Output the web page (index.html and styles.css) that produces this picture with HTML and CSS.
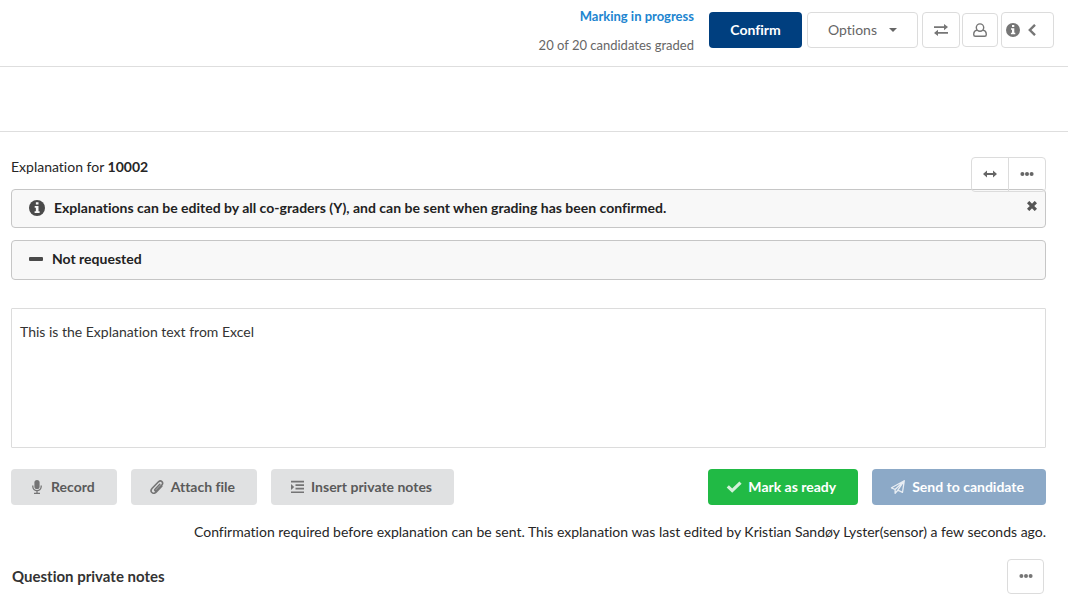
FILE: index.html
```html
<!DOCTYPE html>
<html lang="en">
<head>
<meta charset="utf-8">
<title>Explanation for 10002</title>
<link rel="stylesheet" href="styles.css">
</head>
<body>
<header class="topbar">
  <div class="status">
    <a class="status-link" href="#">Marking in progress</a>
    <span class="status-count">20 of 20 candidates graded</span>
  </div>
  <div class="actions">
    <button class="btn confirm" type="button">Confirm</button>
    <button class="btn outline options" type="button">Options
      <svg class="caret" width="8" height="4" viewBox="0 0 8 4"><path d="M0 0h8L4 4z" fill="currentColor"/></svg>
    </button>
    <button class="btn outline swap" type="button" aria-label="Swap">
      <svg width="14" height="12" viewBox="0 0 14 12" fill="currentColor"><path d="M0 2.200h10V0l4 3.100-4 3.100V4.100H0zM14 7.900H4V5.800L0 8.900 4 12V9.800h10z"/></svg>
    </button>
    <button class="btn outline user" type="button" aria-label="User">
      <svg width="14" height="14" viewBox="0 0 14 14" fill="none" stroke="currentColor" stroke-width="1.400"><circle cx="7" cy="4.600" r="3.700"/><path d="M4 7.200C1.800 7.500.7 9.400.7 11.500c0 1.100.7 1.800 1.600 1.800h9.400c.9 0 1.600-.7 1.600-1.800 0-2.100-1.100-4-3.300-4.300"/></svg>
    </button>
    <button class="btn outline info" type="button" aria-label="Show information">
      <svg width="14" height="14" viewBox="0 0 14 14"><circle cx="7" cy="7" r="7" fill="currentColor"/><path d="M6 2h2.300v2H6zM5 5.200h3.300v4.600h1V11.300H4.900V9.800h1.100V6.700H5z" fill="#fff"/></svg>
      <svg width="8" height="12" viewBox="0 0 8 12" fill="none" stroke="currentColor" stroke-width="2.400"><path d="M7 .8 1.800 6 7 11.200"/></svg>
    </button>
  </div>
</header>
<div class="subbar"></div>
<main class="content">
  <section class="explanation">
    <p class="caption">Explanation for <b>10002</b></p>
    <div class="group">
      <button class="group-btn" type="button" aria-label="Expand">
        <svg width="14" height="8" viewBox="0 0 14 8" fill="currentColor"><path d="M0 4 4 .4v2.600h6V.4L14 4l-4 3.600V5H4v2.600z"/></svg>
      </button>
      <button class="group-btn" type="button" aria-label="More">
        <svg width="14" height="4" viewBox="0 0 14 4" fill="currentColor"><circle cx="2.400" cy="2" r="2"/><circle cx="7" cy="2" r="2"/><circle cx="11.600" cy="2" r="2"/></svg>
      </button>
    </div>
    <div class="message">
      <svg class="message-icon" width="16" height="16" viewBox="0 0 14 14"><circle cx="7" cy="7" r="7" fill="currentColor"/><path d="M6 2h2.300v2H6zM5 5.200h3.300v4.600h1V11.300H4.900V9.800h1.100V6.700H5z" fill="#f8f8f8"/></svg>
      <span class="message-text">Explanations can be edited by all co-graders (Y), and can be sent when grading has been confirmed.</span>
      <button class="close" type="button" aria-label="Close">
        <svg width="10" height="10" viewBox="0 0 9 9" fill="none" stroke="currentColor" stroke-width="3"><path d="m1 1 7 7M8 1 1 8"/></svg>
      </button>
    </div>
    <div class="message request">
      <svg width="14" height="4" viewBox="0 0 14 4"><rect width="14" height="4" rx="1" fill="currentColor"/></svg>
      <span class="message-text">Not requested</span>
    </div>
    <textarea class="editor" aria-label="Explanation">This is the Explanation text from Excel</textarea>
    <div class="toolbar">
      <button class="btn grey" type="button">
        <svg class="icon" width="16" height="14" viewBox="0 0 16 14"><rect x="5.400" y="0" width="5.200" height="9" rx="2.600" fill="currentColor"/><path d="M3.800 5.400v1.200a4.200 4 0 0 0 8.400 0V5.400M8 10.500V13M5 13.300h6" fill="none" stroke="currentColor" stroke-width="1.300"/></svg>
        Record
      </button>
      <button class="btn grey" type="button">
        <svg class="icon" width="16" height="14" viewBox="0 0 16 14" fill="none" stroke="currentColor" stroke-width="1.600" stroke-linecap="round"><path d="m10.800 4.300-4.700 4.900c-1 1.100.3 2.300 1.300 1.300l5.300-5.400c2.400-2.600-.8-5.600-3.200-3.300L3.200 8.200c-3 3.300.9 6.800 3.900 3.900l5.700-5.800"/></svg>
        Attach file
      </button>
      <button class="btn grey" type="button">
        <svg class="icon" width="16" height="14" viewBox="0 0 16 14" fill="currentColor"><path d="M2 .8h13v1.600H2zM6.500 4.300H15v1.600H6.500zM6.500 7.800H15v1.600H6.500zM2 11.500h13v1.600H2zM2 3.900 5.200 6.900 2 9.900z"/></svg>
        Insert private notes
      </button>
      <button class="btn green" type="button">
        <svg class="icon" width="16" height="14" viewBox="0 0 16 14" fill="none" stroke="currentColor" stroke-width="3.200"><path d="m1.800 6.400 4.400 4.200L14.500 2.600"/></svg>
        Mark as ready
      </button>
      <button class="btn send" type="button">
        <svg class="icon" width="16" height="14" viewBox="0 0 16 14" fill="none" stroke="currentColor" stroke-width="1.300" stroke-linejoin="round"><path d="M14.300.7 1.500 7.800l3.600 1.700L14.300.7 12.500 12.300 7.800 10.200 14.300.7M5.100 9.500v3.800l2.700-3.100"/></svg>
        Send to candidate
      </button>
    </div>
    <p class="note">Confirmation required before explanation can be sent. This explanation was last edited by Kristian Sandøy Lyster(sensor) a few seconds ago.</p>
  </section>
  <section class="notes">
    <h2 class="notes-title">Question private notes</h2>
    <button class="btn outline more" type="button" aria-label="More">
      <svg width="14" height="4" viewBox="0 0 14 4" fill="currentColor"><circle cx="2.400" cy="2" r="2"/><circle cx="7" cy="2" r="2"/><circle cx="11.600" cy="2" r="2"/></svg>
    </button>
  </section>
</main>
</body>
</html>
```

FILE: styles.css
```css
* { box-sizing: border-box; }
body {
  margin: 0;
  background: #fff;
  color: #262626;
  font: 14px/20px Lato, "Liberation Sans", sans-serif;
  font-variant-ligatures: none;
}
button, textarea { font: inherit; font-variant-ligatures: none; margin: 0; }
button { cursor: pointer; }
svg { display: block; flex: none; }
p, h2 { margin: 0; }

.topbar {
  display: flex;
  justify-content: flex-end;
  gap: 15px;
  height: 67px;
  padding: 0 14px 0 0;
  border-bottom: 1px solid #dedede;
}
.status {
  display: flex;
  flex-direction: column;
  align-items: flex-end;
  gap: 9px;
  padding-top: 6px;
  font-size: 13px;
}
.status-link { color: #2185d0; font-weight: 700; text-decoration: none; }
.status-count { color: #666; }
.actions { display: flex; align-items: center; gap: 4px; height: 60px; }

.btn {
  display: flex;
  align-items: center;
  justify-content: center;
  height: 36px;
  padding: 0 22px 0 18px;
  border: 0;
  border-radius: 4px;
  font-weight: 700;
  white-space: nowrap;
}
.confirm { width: 93px; margin-right: 1px; padding: 0; background: #003f7f; color: #fff; }
.outline {
  border: 1px solid #dcdcdc;
  background: #fff;
  color: #767676;
  font-weight: 400;
}
.options { gap: 12px; width: 111px; padding: 0; color: #666; }
.swap { width: 38px; padding: 0; }
.user { width: 36px; height: 34px; margin-left: -2px; padding: 0; }
.info { gap: 8px; width: 53px; margin-left: -1px; padding: 0 13px 0 0; }

.subbar { height: 65px; border-bottom: 1px solid #dedede; }

.content { padding: 25px 22px 18px 11px; }
.explanation { position: relative; }
.caption { margin-bottom: 12px; }
.group {
  position: absolute;
  top: 0;
  right: 0;
  z-index: 1;
  display: flex;
  height: 35px;
  border: 1px solid #dcdcdc;
  border-radius: 4px;
}
.group-btn {
  display: flex;
  align-items: center;
  justify-content: center;
  width: 36px;
  padding: 0 0 1px;
  border: 0;
  background: transparent;
  color: #666;
}
.group-btn + .group-btn { width: 37px; border-left: 1px solid #dcdcdc; }

.message {
  display: flex;
  align-items: center;
  gap: 9px;
  min-height: 39px;
  margin-bottom: 12px;
  padding: 0 8px 2px 17px;
  border: 1px solid #c6c6c6;
  border-radius: 4px;
  background: #f8f8f8;
  color: #4a4a4a;
  font-weight: 700;
}
.message-text { color: #222; }
.close { margin-left: auto; padding: 0 0 3px; border: 0; background: transparent; color: #555; }
.request { min-height: 40px; margin-bottom: 28px; }

.editor {
  display: block;
  width: 100%;
  height: 140px;
  padding: 13px 8px;
  border: 1px solid #dcdcdc;
  border-radius: 1px;
  color: #333;
  resize: none;
  outline: 0;
}
.toolbar { display: flex; gap: 14px; margin: 21px 0 17px; }
.icon { margin-right: 6px; opacity: .8; }
.grey { background: #e0e1e2; color: #5a5a5a; }
.green { margin-left: auto; background: #21ba45; color: #fff; }
.send { background: #8ca9c7; color: #fff; }
.note { text-align: right; }

.notes {
  display: flex;
  align-items: center;
  justify-content: space-between;
  margin-top: 17px;
  padding: 0 2px 0 1px;
}
.notes-title { padding-bottom: 2px; color: #333; font-size: 15px; line-height: 20px; }
.more { width: 37px; height: 35px; padding: 0 0 1px; }
```
